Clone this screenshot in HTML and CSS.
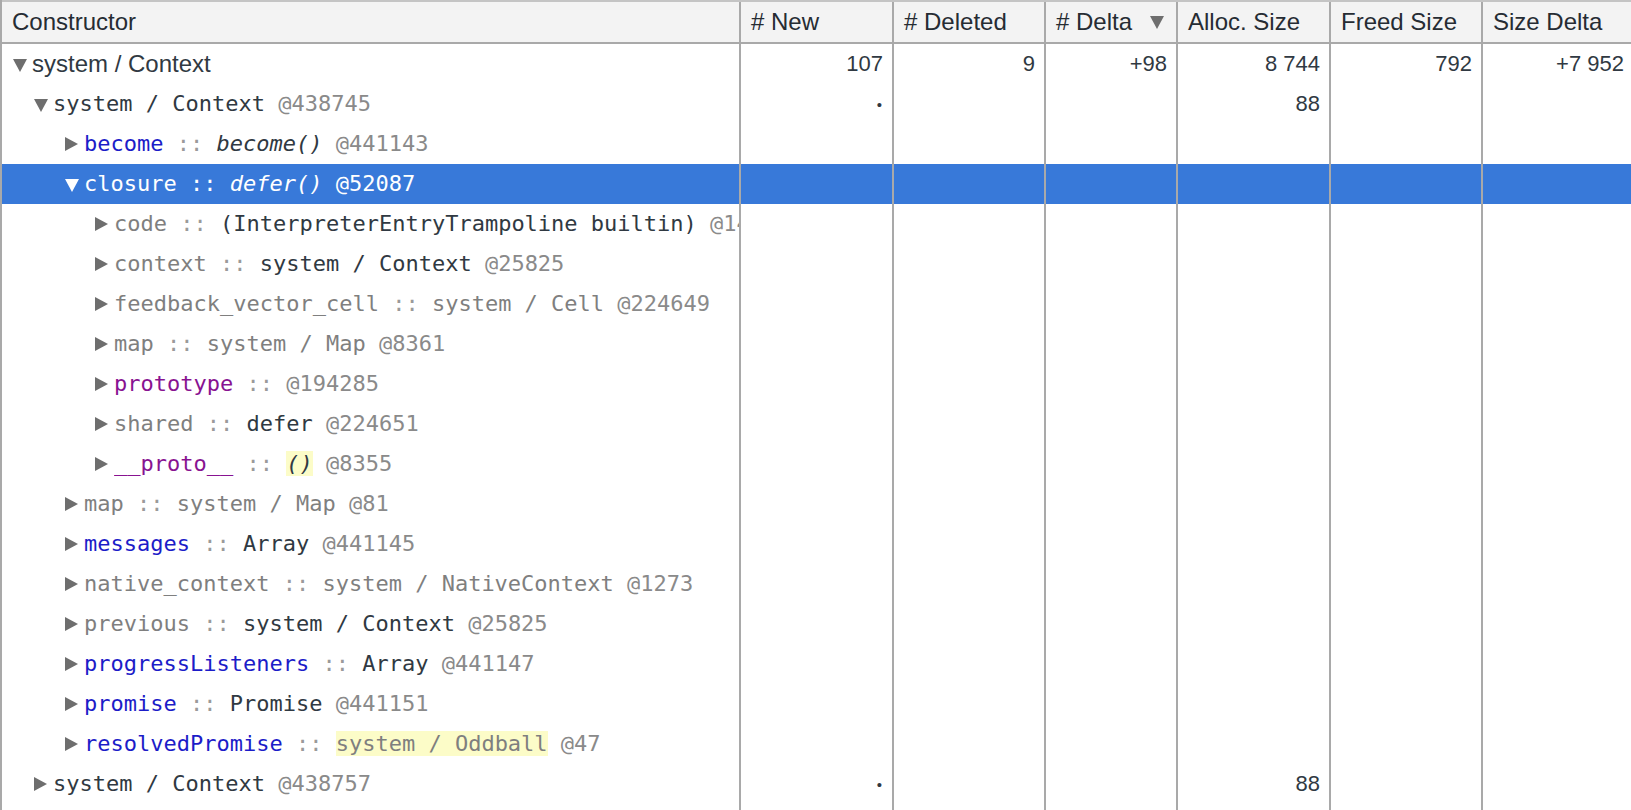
FILE: index.html
```html
<!DOCTYPE html>
<html>
<head>
<meta charset="utf-8">
<link rel="stylesheet" href="styles.css">
</head>
<body>
<div class="grid">
  <div class="row head">
    <div class="cell hc">Constructor</div>
    <div class="cell hc"># New</div>
    <div class="cell hc"># Deleted</div>
    <div class="cell hc sorted"><span># Delta</span><span class="sort-arrow"></span></div>
    <div class="cell hc">Alloc. Size</div>
    <div class="cell hc">Freed Size</div>
    <div class="cell hc last">Size Delta</div>
  </div>

  <div class="row">
    <div class="cell name l0"><span class="tw"><span class="tri down"></span></span><span class="txt sans">system / Context</span></div>
    <div class="cell num">107</div><div class="cell num">9</div><div class="cell num">+98</div><div class="cell num">8 744</div><div class="cell num">792</div><div class="cell num last">+7 952</div>
  </div>

  <div class="row">
    <div class="cell name l1"><span class="tw"><span class="tri down"></span></span><span class="txt mono"><span class="dk">system / Context</span> <span class="id">@438745</span></span></div>
    <div class="cell num dot">•</div><div class="cell num"></div><div class="cell num"></div><div class="cell num">88</div><div class="cell num"></div><div class="cell num last"></div>
  </div>

  <div class="row">
    <div class="cell name l2"><span class="tw"><span class="tri right"></span></span><span class="txt mono"><span class="bl">become</span> <span class="sep">::</span> <span class="dk it">become()</span> <span class="id">@441143</span></span></div>
    <div class="cell num"></div><div class="cell num"></div><div class="cell num"></div><div class="cell num"></div><div class="cell num"></div><div class="cell num last"></div>
  </div>

  <div class="row selected">
    <div class="cell name l2"><span class="tw"><span class="tri down"></span></span><span class="txt mono"><span>closure</span> <span>::</span> <span class="it">defer()</span> <span>@52087</span></span></div>
    <div class="cell num"></div><div class="cell num"></div><div class="cell num"></div><div class="cell num"></div><div class="cell num"></div><div class="cell num last"></div>
  </div>

  <div class="row">
    <div class="cell name l3"><span class="tw"><span class="tri right"></span></span><span class="txt mono"><span class="gr">code</span> <span class="sep">::</span> <span class="dk">(InterpreterEntryTrampoline builtin)</span> <span class="id">@14393</span></span></div>
    <div class="cell num"></div><div class="cell num"></div><div class="cell num"></div><div class="cell num"></div><div class="cell num"></div><div class="cell num last"></div>
  </div>

  <div class="row">
    <div class="cell name l3"><span class="tw"><span class="tri right"></span></span><span class="txt mono"><span class="gr">context</span> <span class="sep">::</span> <span class="dk">system / Context</span> <span class="id">@25825</span></span></div>
    <div class="cell num"></div><div class="cell num"></div><div class="cell num"></div><div class="cell num"></div><div class="cell num"></div><div class="cell num last"></div>
  </div>

  <div class="row">
    <div class="cell name l3"><span class="tw"><span class="tri right"></span></span><span class="txt mono"><span class="gr">feedback_vector_cell</span> <span class="sep">::</span> <span class="gr">system / Cell</span> <span class="id">@224649</span></span></div>
    <div class="cell num"></div><div class="cell num"></div><div class="cell num"></div><div class="cell num"></div><div class="cell num"></div><div class="cell num last"></div>
  </div>

  <div class="row">
    <div class="cell name l3"><span class="tw"><span class="tri right"></span></span><span class="txt mono"><span class="gr">map</span> <span class="sep">::</span> <span class="gr">system / Map</span> <span class="id">@8361</span></span></div>
    <div class="cell num"></div><div class="cell num"></div><div class="cell num"></div><div class="cell num"></div><div class="cell num"></div><div class="cell num last"></div>
  </div>

  <div class="row">
    <div class="cell name l3"><span class="tw"><span class="tri right"></span></span><span class="txt mono"><span class="pu">prototype</span> <span class="sep">::</span> <span class="id">@194285</span></span></div>
    <div class="cell num"></div><div class="cell num"></div><div class="cell num"></div><div class="cell num"></div><div class="cell num"></div><div class="cell num last"></div>
  </div>

  <div class="row">
    <div class="cell name l3"><span class="tw"><span class="tri right"></span></span><span class="txt mono"><span class="gr">shared</span> <span class="sep">::</span> <span class="dk">defer</span> <span class="id">@224651</span></span></div>
    <div class="cell num"></div><div class="cell num"></div><div class="cell num"></div><div class="cell num"></div><div class="cell num"></div><div class="cell num last"></div>
  </div>

  <div class="row">
    <div class="cell name l3"><span class="tw"><span class="tri right"></span></span><span class="txt mono"><span class="pu">__proto__</span> <span class="sep">::</span> <span class="dk it hl">()</span> <span class="id">@8355</span></span></div>
    <div class="cell num"></div><div class="cell num"></div><div class="cell num"></div><div class="cell num"></div><div class="cell num"></div><div class="cell num last"></div>
  </div>

  <div class="row">
    <div class="cell name l2"><span class="tw"><span class="tri right"></span></span><span class="txt mono"><span class="gr">map</span> <span class="sep">::</span> <span class="gr">system / Map</span> <span class="id">@81</span></span></div>
    <div class="cell num"></div><div class="cell num"></div><div class="cell num"></div><div class="cell num"></div><div class="cell num"></div><div class="cell num last"></div>
  </div>

  <div class="row">
    <div class="cell name l2"><span class="tw"><span class="tri right"></span></span><span class="txt mono"><span class="bl">messages</span> <span class="sep">::</span> <span class="dk">Array</span> <span class="id">@441145</span></span></div>
    <div class="cell num"></div><div class="cell num"></div><div class="cell num"></div><div class="cell num"></div><div class="cell num"></div><div class="cell num last"></div>
  </div>

  <div class="row">
    <div class="cell name l2"><span class="tw"><span class="tri right"></span></span><span class="txt mono"><span class="gr">native_context</span> <span class="sep">::</span> <span class="gr">system / NativeContext</span> <span class="id">@1273</span></span></div>
    <div class="cell num"></div><div class="cell num"></div><div class="cell num"></div><div class="cell num"></div><div class="cell num"></div><div class="cell num last"></div>
  </div>

  <div class="row">
    <div class="cell name l2"><span class="tw"><span class="tri right"></span></span><span class="txt mono"><span class="gr">previous</span> <span class="sep">::</span> <span class="dk">system / Context</span> <span class="id">@25825</span></span></div>
    <div class="cell num"></div><div class="cell num"></div><div class="cell num"></div><div class="cell num"></div><div class="cell num"></div><div class="cell num last"></div>
  </div>

  <div class="row">
    <div class="cell name l2"><span class="tw"><span class="tri right"></span></span><span class="txt mono"><span class="bl">progressListeners</span> <span class="sep">::</span> <span class="dk">Array</span> <span class="id">@441147</span></span></div>
    <div class="cell num"></div><div class="cell num"></div><div class="cell num"></div><div class="cell num"></div><div class="cell num"></div><div class="cell num last"></div>
  </div>

  <div class="row">
    <div class="cell name l2"><span class="tw"><span class="tri right"></span></span><span class="txt mono"><span class="bl">promise</span> <span class="sep">::</span> <span class="dk">Promise</span> <span class="id">@441151</span></span></div>
    <div class="cell num"></div><div class="cell num"></div><div class="cell num"></div><div class="cell num"></div><div class="cell num"></div><div class="cell num last"></div>
  </div>

  <div class="row">
    <div class="cell name l2"><span class="tw"><span class="tri right"></span></span><span class="txt mono"><span class="bl">resolvedPromise</span> <span class="sep">::</span> <span class="gr hl">system / Oddball</span> <span class="id">@47</span></span></div>
    <div class="cell num"></div><div class="cell num"></div><div class="cell num"></div><div class="cell num"></div><div class="cell num"></div><div class="cell num last"></div>
  </div>

  <div class="row">
    <div class="cell name l1"><span class="tw"><span class="tri right"></span></span><span class="txt mono"><span class="dk">system / Context</span> <span class="id">@438757</span></span></div>
    <div class="cell num dot">•</div><div class="cell num"></div><div class="cell num"></div><div class="cell num">88</div><div class="cell num"></div><div class="cell num last"></div>
  </div>

  <div class="row filler">
    <div class="cell"></div><div class="cell"></div><div class="cell"></div><div class="cell"></div><div class="cell"></div><div class="cell"></div><div class="cell last"></div>
  </div>
</div>
</body>
</html>
```

FILE: styles.css
```css
html, body {
  margin: 0;
  padding: 0;
  background: #ffffff;
  height: 100%;
  overflow: hidden;
}

.grid {
  display: flex;
  flex-direction: column;
  height: 100vh;
  border-left: 2px solid #a9a9a9;
  box-sizing: border-box;
  font-family: "Liberation Sans", Arial, sans-serif;
  color: #303942;
}

.row {
  display: grid;
  grid-template-columns: 739px 153px 152px 132px 153px 152px 1fr;
  height: 40px;
  flex: none;
}

.row.head {
  height: 44px;
  background: #f3f3f3;
  border-top: 2px solid #c4c4c4;
  border-bottom: 2px solid #a9a9a9;
  box-sizing: border-box;
}

.row.filler {
  flex: 1 1 auto;
  height: auto;
}

.cell {
  box-sizing: border-box;
  border-right: 2px solid #a9a9a9;
  display: flex;
  align-items: center;
  min-width: 0;
  white-space: nowrap;
}

.cell.last {
  border-right: none;
}

.hc {
  font-size: 24px;
  padding-left: 10px;
  color: #262c33;
}

.hc.sorted {
  justify-content: space-between;
  padding-right: 12px;
}

.sort-arrow {
  width: 0;
  height: 0;
  border-left: 7.5px solid transparent;
  border-right: 7.5px solid transparent;
  border-top: 13px solid #6e6e6e;
}

.num {
  justify-content: flex-end;
  padding-right: 9px;
  font-size: 22px;
}

.num.last {
  padding-right: 7px;
}

.num.dot {
  font-size: 15px;
  padding-right: 10px;
}

.name {
  padding-right: 0;
}

.name.l0 { padding-left: 11px; }
.name.l1 { padding-left: 32px; }
.name.l2 { padding-left: 63px; }
.name.l3 { padding-left: 93px; }

.tw {
  flex: none;
  width: 19px;
  display: flex;
  align-items: center;
}

.tri {
  width: 0;
  height: 0;
}

.tri.down {
  border-left: 7px solid transparent;
  border-right: 7px solid transparent;
  border-top: 13px solid #6e6e6e;
  margin-top: 2px;
}

.tri.right {
  border-top: 7px solid transparent;
  border-bottom: 7px solid transparent;
  border-left: 13px solid #6e6e6e;
}

.txt {
  overflow: hidden;
  min-width: 0;
  flex: 1 1 auto;
  white-space: pre;
}

.sans {
  font-family: "Liberation Sans", Arial, sans-serif;
  font-size: 24px;
}

.mono {
  font-family: "DejaVu Sans Mono", Menlo, monospace;
  font-size: 22px;
  margin-top: -2px;
}

.dk { color: #303942; }
.gr { color: #7f7f7f; }
.sep { color: #9a9a9a; }
.id { color: #8a8a8a; }
.bl { color: #1c1cc8; }
.pu { color: #881391; }
.it { font-style: italic; }
.hl { background: #fcfcc8; }

.row.selected {
  background: #3879d9;
  color: #ffffff;
}

.row.selected .tri.down {
  border-top-color: #ffffff;
}

.row.selected .txt {
  color: #ffffff;
}
```
